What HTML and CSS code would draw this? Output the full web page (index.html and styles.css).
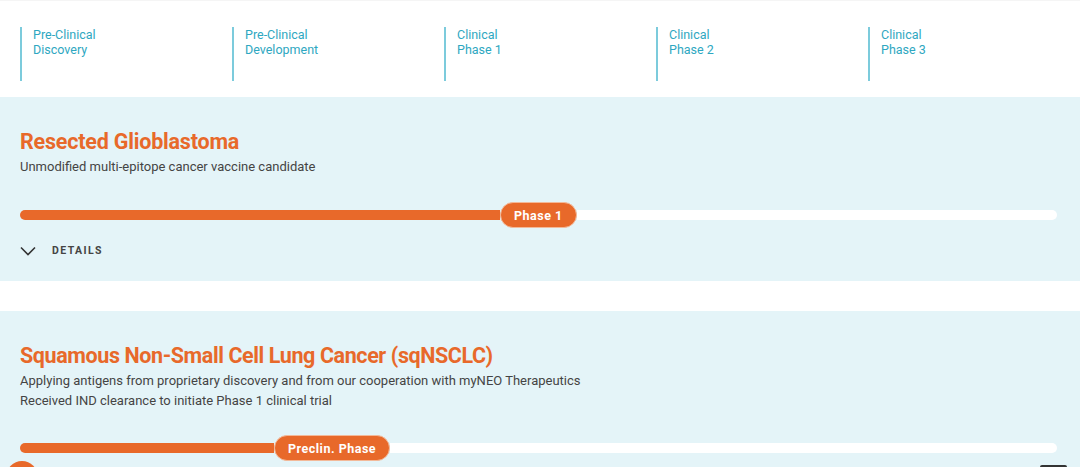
FILE: index.html
```html
<!DOCTYPE html>
<html lang="en">
<head>
<meta charset="utf-8">
<title>Pipeline</title>
<link rel="stylesheet" href="styles.css">
</head>
<body>
<header class="phases">
  <div class="phase">Pre-Clinical<br>Discovery</div>
  <div class="phase">Pre-Clinical<br>Development</div>
  <div class="phase">Clinical<br>Phase 1</div>
  <div class="phase">Clinical<br>Phase 2</div>
  <div class="phase">Clinical<br>Phase 3</div>
</header>
<main>
  <section class="card">
    <h2 class="title">Resected Glioblastoma</h2>
    <p class="desc">Unmodified multi-epitope cancer vaccine candidate</p>
    <div class="track">
      <div class="fill" style="width:480px"></div>
      <div class="pill">Phase 1</div>
      <div class="rest"></div>
    </div>
    <div class="details">
      <svg class="chev" width="16" height="10" viewBox="0 0 16 10"><path d="M1 1.5 L8 8.5 L15 1.5" fill="none" stroke="#333" stroke-width="1.6"/></svg>
      <span>DETAILS</span>
    </div>
  </section>
  <section class="card card2">
    <h2 class="title">Squamous Non-Small Cell Lung Cancer (sqNSCLC)</h2>
    <p class="desc">Applying antigens from proprietary discovery and from our cooperation with myNEO Therapeutics<br>Received IND clearance to initiate Phase 1 clinical trial</p>
    <div class="track">
      <div class="fill" style="width:254px"></div>
      <div class="pill">Preclin. Phase</div>
      <div class="rest"></div>
    </div>
  </section>
</main>
<div class="fab"></div>
<div class="totop"></div>
</body>
</html>
```
FILE: styles.css
```css
* { box-sizing: border-box; }
html, body { margin: 0; padding: 0; }
body {
  background: #fff;
  font-family: Roboto, "Liberation Sans", sans-serif;
  color: #444;
  overflow: hidden;
  height: 467px;
  border-top: 1px solid #f5f5f5;
}
.phases {
  display: grid;
  grid-template-columns: repeat(5, 212px);
  padding: 26px 0 0 20px;
  height: 96px;
}
.phase {
  border-left: 2px solid #7ccbdc;
  height: 54px;
  padding: 0 0 0 11px;
  color: #2ea7c1;
  font-size: 12.5px;
  line-height: 15px;
}
.card {
  background: #e4f4f8;
  padding: 31px 23px 24px 20px;
}
.card2 {
  margin-top: 30px;
  padding-top: 31px;
}
.title {
  margin: 0;
  color: #e8692a;
  font-size: 21.5px;
  font-weight: 700;
  line-height: 28px;
  letter-spacing: -0.2px;
}
.card2 .title { letter-spacing: -0.4px; }
.desc {
  margin: 1px 0 0;
  font-size: 13px;
  line-height: 20px;
  color: #444;
}
.track {
  display: flex;
  align-items: center;
  height: 28px;
  margin-top: 24px;
}
.card2 .track { margin-top: 23px; }
.fill {
  height: 10px;
  background: #e8692a;
  border-radius: 5px 0 0 5px;
}
.pill {
  height: 26px;
  padding: 0 13px;
  display: flex;
  align-items: center;
  background: #e8692a;
  border: 1px solid #f3b999;
  border-radius: 13px;
  color: #fff;
  font-size: 12.5px;
  font-weight: 700;
  letter-spacing: 0.5px;
}
.rest {
  flex: 1;
  height: 10px;
  background: #fff;
  border-radius: 0 5px 5px 0;
}
.details {
  display: flex;
  align-items: center;
  gap: 16px;
  margin-top: 15px;
  font-size: 10.5px;
  font-weight: 700;
  letter-spacing: 1.4px;
  color: #444;
}
.fab {
  position: fixed;
  z-index: 5;
  left: 6px;
  top: 461px;
  width: 32px;
  height: 32px;
  border-radius: 50%;
  background: #e8692a;
}
.totop {
  position: fixed;
  z-index: 5;
  left: 1040px;
  top: 465px;
  width: 27px;
  height: 20px;
  background: #333;
  border-radius: 2px;
}
```
